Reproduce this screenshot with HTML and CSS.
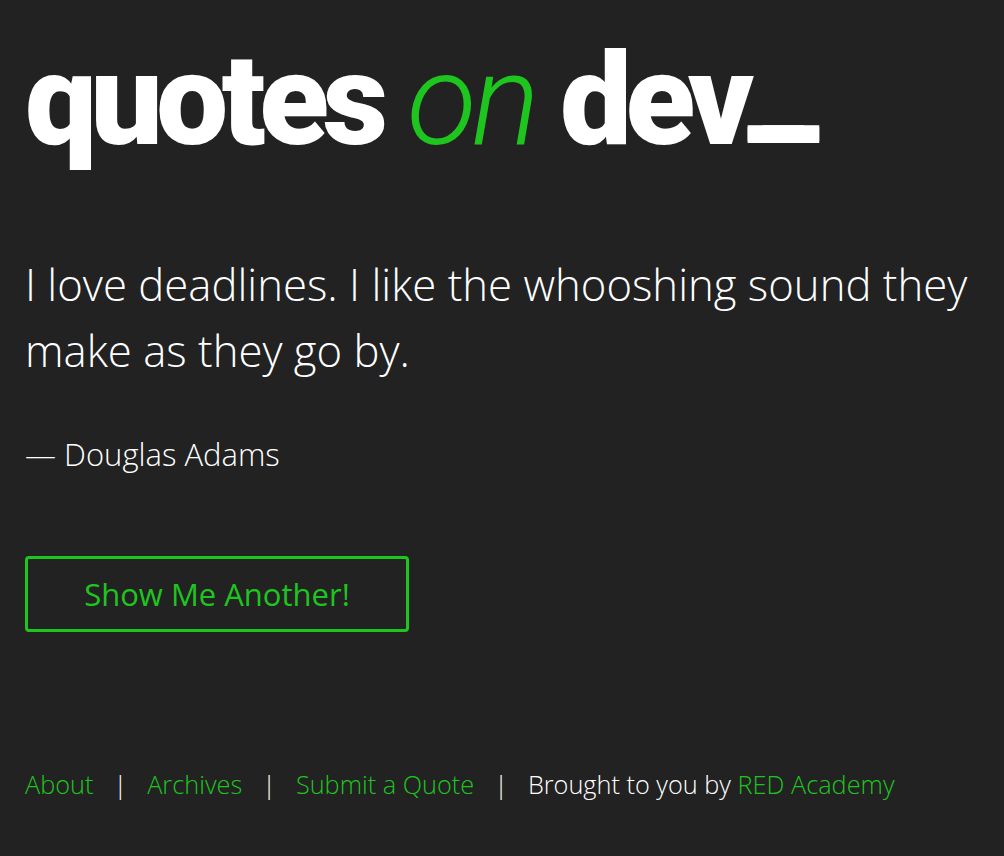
FILE: index.html
```html
<!DOCTYPE html>
<html lang="en">
<head>
<meta charset="utf-8">
<title>Quotes on Dev</title>
<link rel="stylesheet" href="styles.css">
</head>
<body>
<div class="page">
  <header class="site-header">
    <h1 class="logo"><span class="logo-bold">quotes</span> <span class="logo-on">on</span> <span class="logo-bold">dev</span><span class="logo-cursor">_</span></h1>
  </header>
  <main class="quote-area">
    <blockquote class="quote-text">I love deadlines. I like the whooshing sound they make as they go by.</blockquote>
    <p class="quote-author">— Douglas Adams</p>
    <button class="another-btn" type="button">Show Me Another!</button>
  </main>
  <footer class="site-footer">
    <a class="foot-link" href="#">About</a>
    <span class="sep">|</span>
    <a class="foot-link" href="#">Archives</a>
    <span class="sep">|</span>
    <a class="foot-link" href="#">Submit a Quote</a>
    <span class="sep">|</span>
    <span class="credit">Brought to you by <a class="foot-link" href="#">RED Academy</a></span>
  </footer>
</div>
</body>
</html>
```
FILE: styles.css
```css
html, body {
  margin: 0;
  padding: 0;
  background: #222222;
}
body {
  color: #ffffff;
  font-family: "Open Sans", "Noto Sans", sans-serif;
}
.page {
  padding: 0 25px;
  display: flex;
  flex-direction: column;
}
.logo {
  margin: 0;
  padding-top: 25px;
  font-family: Roboto, sans-serif;
  font-size: 128px;
  line-height: 150px;
  font-weight: 900;
  letter-spacing: -6.5px;
  white-space: nowrap;
}
.logo-on {
  color: #1fc51f;
  font-weight: 300;
  font-style: italic;
  letter-spacing: -5px;
}
.logo-cursor {
  margin-left: 0;
  letter-spacing: 0;
  line-height: 0;
  vertical-align: 17px;
  text-shadow: 15px 0 0 #ffffff, 0 -2px 0 #ffffff, 15px -2px 0 #ffffff;
}
.quote-area {
  display: flex;
  flex-direction: column;
  align-items: flex-start;
  margin-top: 76px;
}
.quote-text {
  margin: 0;
  font-size: 43.7px;
  line-height: 66px;
  font-weight: 300;
}
.quote-author {
  margin: 49px 0 0;
  font-size: 31px;
  line-height: 44px;
  font-weight: 300;
}
.another-btn {
  margin-top: 80px;
  width: 384px;
  height: 76px;
  background: transparent;
  border: 3px solid #1fc51f;
  border-radius: 4px;
  color: #1fc51f;
  font-family: inherit;
  font-size: 31px;
  font-weight: 400;
  cursor: pointer;
}
.site-footer {
  margin-top: 135px;
  display: flex;
  align-items: baseline;
  font-size: 25.3px;
  font-weight: 300;
}
.foot-link {
  color: #1fc51f;
  text-decoration: none;
}
.sep {
  margin: 0 20px;
}
```
